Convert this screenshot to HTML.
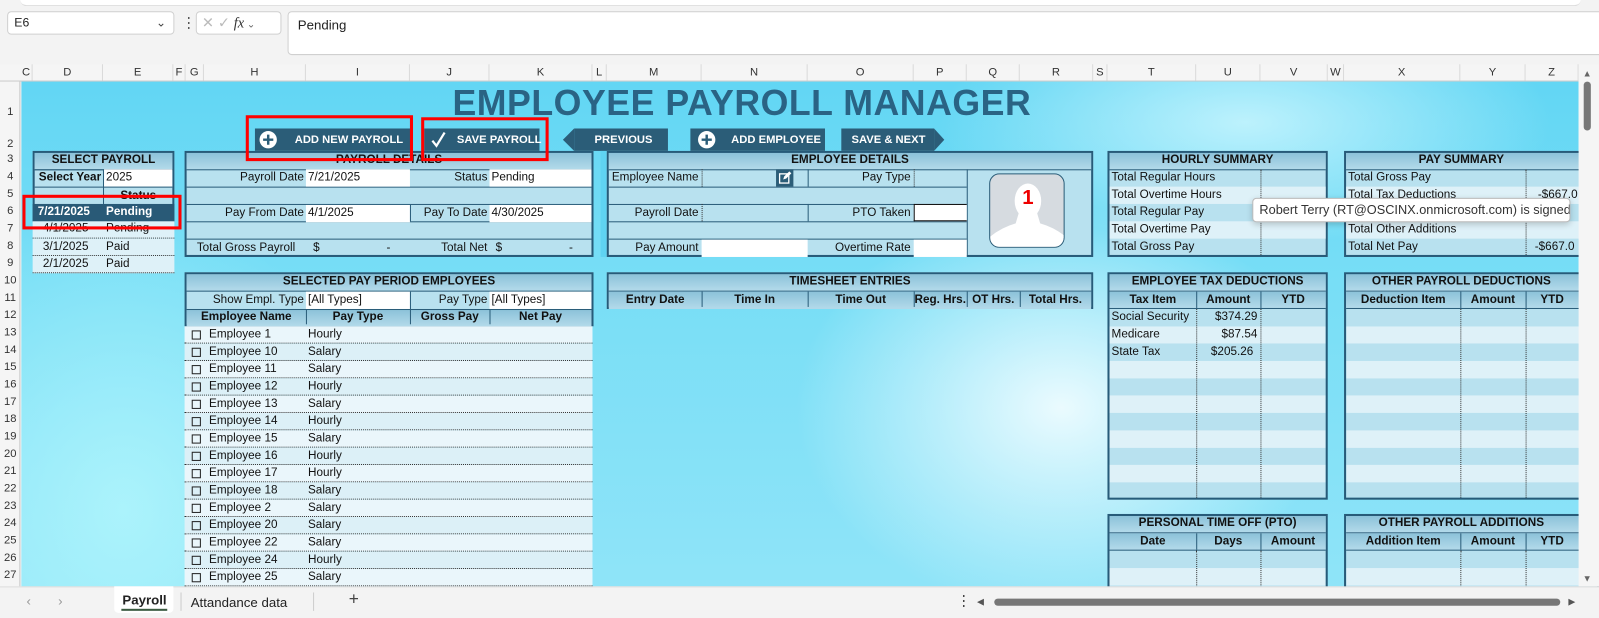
<!DOCTYPE html>
<html><head><meta charset="utf-8"><style>
*{box-sizing:border-box;margin:0;padding:0}
html,body{width:1599px;height:618px;overflow:hidden;background:#f3f3f3;font-family:"Liberation Sans",sans-serif}
#w{position:absolute;left:0;top:0;width:1568px;height:606px;transform:scale(1.01977);transform-origin:0 0;overflow:hidden;background:#f3f3f3}
.a{position:absolute}
.t{position:absolute;font-size:11.5px;line-height:17px;height:17px;color:#111;white-space:nowrap}
.b{font-weight:bold}
.r{text-align:right}
.c{text-align:center}
.hd{position:absolute;height:17px;background:linear-gradient(#8cc2d9,#b3daea);border-bottom:1px solid #2a5d7a}
.bx{position:absolute;border:2px solid #275b79}
.lt{position:absolute;height:17px;background:#def1f8}
.wh{position:absolute;height:17px;background:#fff}
.vd{position:absolute;width:0;border-left:1px dotted #333}
.vs{position:absolute;width:1px;background:#2a5d7a}
.hs{position:absolute;height:1px;background:#2a5d7a}
.ch{position:absolute;top:63px;font-size:11px;color:#333;text-align:center;height:16px;line-height:16px;border-right:1px solid #dadada}
.rh{position:absolute;left:0;width:20px;font-size:11px;color:#333;text-align:center;height:17px;line-height:17px}
.btn{position:absolute;top:126px;height:22px;background:#2b5d78;color:#fff;font-size:11px;font-weight:bold;line-height:22px;white-space:nowrap}
.btn span{white-space:nowrap}
.red{position:absolute;border:3px solid #f00}
.emp{position:absolute;left:181px;width:400px;height:17px;border-bottom:1px dotted #333;font-size:11.5px;line-height:17px;color:#111}
.emp span{position:absolute;white-space:nowrap}
.cb{position:absolute;left:7px;top:4px;width:9px;height:9px;border:1px solid #222}
</style></head><body><div id="w">

<div class="a" style="left:20px;top:0;width:1530px;height:6px;background:#fff;border-radius:0 0 6px 6px;border-bottom:1px solid #ddd"></div>
<div class="a" style="left:7px;top:11px;width:164px;height:23px;background:#fff;border:1px solid #d0d0d0;border-radius:4px;font-size:12px;line-height:21px;padding-left:6px;color:#222">E6<span style="position:absolute;right:7px;top:0;color:#444">&#8964;</span></div>
<div class="a" style="left:178px;top:13px;font-size:14px;color:#555;line-height:18px">&#8942;</div>
<div class="a" style="left:192px;top:11px;width:84px;height:23px;background:#fff;border:1px solid #d0d0d0;border-radius:4px;font-size:14px;line-height:21px;color:#bbb;padding-left:5px;white-space:nowrap">&#10005; &#10003; <i style="font-family:'Liberation Serif',serif;color:#333">fx</i><span style="font-size:10px;color:#666"> &#8964;</span></div>
<div class="a" style="left:282px;top:11px;width:1290px;height:43px;background:#fff;border:1px solid #d0d0d0;border-radius:4px;font-size:13px;padding:5px 0 0 9px;color:#222">Pending</div>

<div class="a" style="left:0;top:63px;width:1548px;height:17px;background:#f5f5f5;border-bottom:1px solid #c8c8c8"></div>
<div class="a" style="left:0;top:80px;width:20px;height:495px;background:#f5f5f5;border-right:1px solid #c8c8c8"></div>
<div class="ch" style="left:20px;width:12px">C</div>
<div class="ch" style="left:32px;width:69px">D</div>
<div class="ch" style="left:101px;width:69px">E</div>
<div class="ch" style="left:170px;width:12px">F</div>
<div class="ch" style="left:182px;width:18px">G</div>
<div class="ch" style="left:200px;width:100px">H</div>
<div class="ch" style="left:300px;width:102px">I</div>
<div class="ch" style="left:402px;width:78px">J</div>
<div class="ch" style="left:480px;width:101px">K</div>
<div class="ch" style="left:581px;width:14px">L</div>
<div class="ch" style="left:595px;width:93px">M</div>
<div class="ch" style="left:688px;width:104px">N</div>
<div class="ch" style="left:792px;width:104px">O</div>
<div class="ch" style="left:896px;width:52px">P</div>
<div class="ch" style="left:948px;width:52px">Q</div>
<div class="ch" style="left:1000px;width:72px">R</div>
<div class="ch" style="left:1072px;width:14px">S</div>
<div class="ch" style="left:1086px;width:87px">T</div>
<div class="ch" style="left:1173px;width:63px">U</div>
<div class="ch" style="left:1236px;width:66px">V</div>
<div class="ch" style="left:1302px;width:16px">W</div>
<div class="ch" style="left:1318px;width:114px">X</div>
<div class="ch" style="left:1432px;width:64px">Y</div>
<div class="ch" style="left:1496px;width:52px">Z</div>

<div class="rh" style="top:102px">1</div><div class="rh" style="top:133px">2</div>
<div class="rh" style="top:148px">3</div><div class="rh" style="top:165px">4</div><div class="rh" style="top:182px">5</div><div class="rh" style="top:199px">6</div><div class="rh" style="top:216px">7</div><div class="rh" style="top:233px">8</div><div class="rh" style="top:250px">9</div><div class="rh" style="top:267px">10</div><div class="rh" style="top:284px">11</div><div class="rh" style="top:301px">12</div><div class="rh" style="top:318px">13</div><div class="rh" style="top:335px">14</div><div class="rh" style="top:352px">15</div><div class="rh" style="top:369px">16</div><div class="rh" style="top:386px">17</div><div class="rh" style="top:403px">18</div><div class="rh" style="top:420px">19</div><div class="rh" style="top:437px">20</div><div class="rh" style="top:454px">21</div><div class="rh" style="top:471px">22</div><div class="rh" style="top:488px">23</div><div class="rh" style="top:505px">24</div><div class="rh" style="top:522px">25</div><div class="rh" style="top:539px">26</div><div class="rh" style="top:556px">27</div>

<div class="a" style="left:21px;top:80px;width:1527px;height:495px;background:
radial-gradient(ellipse 260px 200px at 1020px 320px,rgba(240,252,255,.95),rgba(240,252,255,0)),
radial-gradient(ellipse 300px 120px at 1200px 40px,rgba(210,248,255,.8),rgba(210,248,255,0)),
radial-gradient(ellipse 250px 300px at 100px 420px,rgba(175,245,252,.9),rgba(175,245,252,0)),
linear-gradient(180deg,#62d6f4 0%,#78def6 40%,#8fe4f8 100%)"></div>

<div class="a b" style="left:300px;top:81px;width:855px;text-align:center;font-size:35px;line-height:42px;color:#2a6384;letter-spacing:.5px">EMPLOYEE PAYROLL MANAGER</div>

<div class="btn" style="left:250px;width:154px"><svg class="a" style="left:4px;top:2px" width="18" height="18"><circle cx="9" cy="9" r="8.5" fill="#fff"/><path d="M9 4v10M4 9h10" stroke="#2b5d78" stroke-width="2.4"/></svg><span class="a" style="left:39px">ADD NEW PAYROLL</span></div>
<div class="btn" style="left:416px;width:113px"><svg class="a" style="left:6px;top:2px" width="16" height="18"><path d="M2 10l4 5L14 2" stroke="#fff" stroke-width="2.2" fill="none"/></svg><span class="a" style="left:32px">SAVE PAYROLL</span></div>
<div class="btn" style="left:563px;width:92px"><span class="a" style="left:20px">PREVIOUS</span></div>
<div class="a" style="left:552px;top:126px;width:0;height:0;border-top:11px solid transparent;border-bottom:11px solid transparent;border-right:11px solid #2b5d78"></div>
<div class="btn" style="left:677px;width:132px"><svg class="a" style="left:7px;top:2px" width="18" height="18"><circle cx="9" cy="9" r="8.5" fill="#fff"/><path d="M9 4v10M4 9h10" stroke="#2b5d78" stroke-width="2.4"/></svg><span class="a" style="left:40px">ADD EMPLOYEE</span></div>
<div class="btn" style="left:825px;width:91px"><span class="a" style="left:10px">SAVE &amp; NEXT</span></div>
<div class="a" style="left:916px;top:126px;width:0;height:0;border-top:11px solid transparent;border-bottom:11px solid transparent;border-left:10px solid #2b5d78"></div>
<div class="a" style="left:589px;top:148px;width:6px;height:104px;background:#5fd3f2"></div>

<!-- SELECT PAYROLL -->
<div class="bx" style="left:32px;top:148px;width:139px;height:70px;background:#b8e1ef"></div>
<div class="hd" style="left:34px;top:150px;width:135px"></div>
<div class="t b c" style="left:32px;top:149px;width:139px">SELECT PAYROLL</div>
<div class="hs" style="left:34px;top:166px;width:135px"></div>
<div class="t b" style="left:38px;top:166px">Select Year</div>
<div class="wh" style="left:102px;top:166px;width:67px"></div>
<div class="t" style="left:104px;top:166px">2025</div>
<div class="vs" style="left:101px;top:166px;height:34px"></div>
<div class="hs" style="left:34px;top:183px;width:135px"></div>
<div class="t b" style="left:118px;top:184px">Status</div>
<div class="a" style="left:32px;top:200px;width:139px;height:17px;background:#295a77"></div>
<div class="t b" style="left:37px;top:200px;color:#fff">7/21/2025</div>
<div class="t b" style="left:104px;top:200px;color:#fff">Pending</div>
<div class="lt" style="left:32px;top:217px;width:139px;border-bottom:1px dotted #333"></div>
<div class="lt" style="left:32px;top:234px;width:139px;border-bottom:1px dotted #333"></div>
<div class="lt" style="left:32px;top:251px;width:139px;border-bottom:1px dotted #333"></div>
<div class="t" style="left:42px;top:216px">4/1/2025</div><div class="t" style="left:104px;top:216px">Pending</div>
<div class="t" style="left:42px;top:234px">3/1/2025</div><div class="t" style="left:104px;top:234px">Paid</div>
<div class="t" style="left:42px;top:251px">2/1/2025</div><div class="t" style="left:104px;top:251px">Paid</div>

<!-- PAYROLL DETAILS -->
<div class="bx" style="left:181px;top:148px;width:401px;height:104px;background:#b8e1ef"></div>
<div class="hd" style="left:183px;top:150px;width:397px"></div>
<div class="t b c" style="left:181px;top:149px;width:401px">PAYROLL DETAILS</div>
<div class="hs" style="left:183px;top:183px;width:397px"></div>
<div class="hs" style="left:183px;top:200px;width:397px"></div>
<div class="hs" style="left:183px;top:217px;width:397px"></div>
<div class="hs" style="left:183px;top:234px;width:397px"></div>
<div class="wh" style="left:300px;top:166px;width:102px"></div>
<div class="wh" style="left:480px;top:166px;width:100px"></div>
<div class="wh" style="left:300px;top:201px;width:102px"></div>
<div class="wh" style="left:480px;top:201px;width:100px"></div>
<div class="vs" style="left:402px;top:201px;height:16px"></div>
<div class="t r" style="left:183px;top:166px;width:115px">Payroll Date</div><div class="t" style="left:302px;top:166px">7/21/2025</div>
<div class="t r" style="left:402px;top:166px;width:76px">Status</div><div class="t" style="left:482px;top:166px">Pending</div>
<div class="t r" style="left:183px;top:201px;width:115px">Pay From Date</div><div class="t" style="left:302px;top:201px">4/1/2025</div>
<div class="t r" style="left:402px;top:201px;width:76px">Pay To Date</div><div class="t" style="left:482px;top:201px">4/30/2025</div>
<div class="t" style="left:193px;top:235px">Total Gross Payroll</div><div class="t" style="left:307px;top:235px">$</div><div class="t" style="left:379px;top:235px">-</div>
<div class="t r" style="left:402px;top:235px;width:76px">Total Net</div><div class="t" style="left:486px;top:235px">$</div><div class="t" style="left:558px;top:235px">-</div>

<!-- EMPLOYEE DETAILS -->
<div class="bx" style="left:595px;top:148px;width:477px;height:104px;background:#b8e1ef"></div>
<div class="hd" style="left:597px;top:150px;width:473px"></div>
<div class="t b c" style="left:595px;top:149px;width:477px">EMPLOYEE DETAILS</div>
<div class="hs" style="left:597px;top:183px;width:351px"></div>
<div class="hs" style="left:597px;top:200px;width:351px"></div>
<div class="hs" style="left:597px;top:217px;width:351px"></div>
<div class="hs" style="left:597px;top:234px;width:351px"></div>
<div class="vs" style="left:948px;top:166px;height:84px"></div>
<div class="vs" style="left:792px;top:166px;height:17px"></div>
<div class="vs" style="left:792px;top:200px;height:17px"></div>
<div class="vd" style="left:688px;top:166px;height:17px"></div>
<div class="vd" style="left:896px;top:166px;height:17px"></div>
<div class="vd" style="left:688px;top:200px;height:17px"></div>
<div class="t" style="left:600px;top:166px">Employee Name</div>
<div class="a" style="left:761px;top:166px;width:17px;height:17px;background:#2b5d78"><svg width="17" height="17"><rect x="3.5" y="4.5" width="9" height="9" fill="none" stroke="#fff" stroke-width="1.3"/><path d="M7 10l1-3 5-5 2 2-5 5z" fill="#fff"/></svg></div>
<div class="t r" style="left:792px;top:166px;width:101px">Pay Type</div>
<div class="t r" style="left:597px;top:201px;width:88px">Payroll Date</div>
<div class="t r" style="left:792px;top:201px;width:101px">PTO Taken</div>
<div class="wh" style="left:896px;top:200px;width:52px;border:1px solid #111;border-right:none"></div>
<div class="wh" style="left:688px;top:235px;width:104px"></div>
<div class="wh" style="left:896px;top:235px;width:52px"></div>
<div class="t r" style="left:597px;top:235px;width:88px">Pay Amount</div>
<div class="t r" style="left:792px;top:235px;width:101px">Overtime Rate</div>
<div class="a" style="left:970px;top:170px;width:74px;height:73px;background:#d6dbe0;border:1.5px solid #2b5d78;border-radius:10px;overflow:hidden"><svg width="74" height="73"><ellipse cx="37" cy="26" rx="13" ry="17" fill="#fff"/><path d="M28 38q9 8 18 0l3 10q14 4 25 13v12H0V61q11-9 25-13z" fill="#fff"/><text x="37" y="29" text-anchor="middle" font-family="Liberation Sans" font-weight="bold" font-size="20" fill="#e00">1</text></svg></div>

<!-- HOURLY SUMMARY -->
<div class="bx" style="left:1086px;top:148px;width:216px;height:104px;background:#b8e1ef"></div>
<div class="hd" style="left:1088px;top:150px;width:212px"></div>
<div class="t b c" style="left:1086px;top:149px;width:216px">HOURLY SUMMARY</div>
<div class="lt" style="left:1088px;top:183px;width:212px"></div>
<div class="lt" style="left:1088px;top:217px;width:212px"></div>
<div class="vd" style="left:1236px;top:166px;height:84px"></div>
<div class="t" style="left:1090px;top:166px">Total Regular Hours</div>
<div class="t" style="left:1090px;top:183px">Total Overtime Hours</div>
<div class="t" style="left:1090px;top:200px">Total Regular Pay</div>
<div class="t" style="left:1090px;top:217px">Total Overtime Pay</div>
<div class="t" style="left:1090px;top:234px">Total Gross Pay</div>

<!-- PAY SUMMARY -->
<div class="bx" style="left:1318px;top:148px;width:250px;height:104px;background:#b8e1ef"></div>
<div class="hd" style="left:1320px;top:150px;width:248px"></div>
<div class="t b c" style="left:1318px;top:149px;width:230px">PAY SUMMARY</div>
<div class="lt" style="left:1320px;top:183px;width:248px"></div>
<div class="lt" style="left:1320px;top:217px;width:248px"></div>
<div class="vd" style="left:1496px;top:166px;height:84px"></div>
<div class="t" style="left:1322px;top:166px">Total Gross Pay</div>
<div class="t" style="left:1322px;top:183px">Total Tax Deductions</div><div class="t" style="left:1508px;top:183px">-$667.0</div>
<div class="t" style="left:1322px;top:217px">Total Other Additions</div>
<div class="t" style="left:1322px;top:234px">Total Net Pay</div><div class="t" style="left:1505px;top:234px">-$667.0</div>

<!-- SELECTED PAY PERIOD -->
<div class="bx" style="left:181px;top:267px;width:401px;height:53px;background:#b8e1ef"></div>
<div class="hd" style="left:183px;top:269px;width:397px"></div>
<div class="t b c" style="left:181px;top:268px;width:401px">SELECTED PAY PERIOD EMPLOYEES</div>
<div class="wh" style="left:300px;top:286px;width:102px"></div>
<div class="wh" style="left:480px;top:286px;width:100px"></div>
<div class="vs" style="left:402px;top:286px;height:17px"></div>
<div class="t r" style="left:183px;top:286px;width:115px">Show Empl. Type</div><div class="t" style="left:302px;top:286px">[All Types]</div>
<div class="t r" style="left:402px;top:286px;width:76px">Pay Type</div><div class="t" style="left:482px;top:286px">[All Types]</div>
<div class="hd" style="left:183px;top:303px;width:397px;border-top:1px solid #2a5d7a;border-bottom:none"></div>
<div class="vs" style="left:300px;top:303px;height:15px"></div>
<div class="vs" style="left:402px;top:303px;height:15px"></div>
<div class="vs" style="left:480px;top:303px;height:15px"></div>
<div class="t b c" style="left:183px;top:303px;width:117px">Employee Name</div>
<div class="t b c" style="left:300px;top:303px;width:102px">Pay Type</div>
<div class="t b c" style="left:402px;top:303px;width:78px">Gross Pay</div>
<div class="t b c" style="left:480px;top:303px;width:100px">Net Pay</div>

<div class="emp" style="top:320px;background:#eaf6fb"><i class="cb"></i><span style="left:24px">Employee 1</span><span style="left:121px">Hourly</span></div>
<div class="emp" style="top:337px;background:#dcf0f7"><i class="cb"></i><span style="left:24px">Employee 10</span><span style="left:121px">Salary</span></div>
<div class="emp" style="top:354px;background:#eaf6fb"><i class="cb"></i><span style="left:24px">Employee 11</span><span style="left:121px">Salary</span></div>
<div class="emp" style="top:371px;background:#dcf0f7"><i class="cb"></i><span style="left:24px">Employee 12</span><span style="left:121px">Hourly</span></div>
<div class="emp" style="top:388px;background:#eaf6fb"><i class="cb"></i><span style="left:24px">Employee 13</span><span style="left:121px">Salary</span></div>
<div class="emp" style="top:405px;background:#dcf0f7"><i class="cb"></i><span style="left:24px">Employee 14</span><span style="left:121px">Hourly</span></div>
<div class="emp" style="top:422px;background:#eaf6fb"><i class="cb"></i><span style="left:24px">Employee 15</span><span style="left:121px">Salary</span></div>
<div class="emp" style="top:439px;background:#dcf0f7"><i class="cb"></i><span style="left:24px">Employee 16</span><span style="left:121px">Hourly</span></div>
<div class="emp" style="top:456px;background:#eaf6fb"><i class="cb"></i><span style="left:24px">Employee 17</span><span style="left:121px">Hourly</span></div>
<div class="emp" style="top:473px;background:#dcf0f7"><i class="cb"></i><span style="left:24px">Employee 18</span><span style="left:121px">Salary</span></div>
<div class="emp" style="top:490px;background:#eaf6fb"><i class="cb"></i><span style="left:24px">Employee 2</span><span style="left:121px">Salary</span></div>
<div class="emp" style="top:507px;background:#dcf0f7"><i class="cb"></i><span style="left:24px">Employee 20</span><span style="left:121px">Salary</span></div>
<div class="emp" style="top:524px;background:#eaf6fb"><i class="cb"></i><span style="left:24px">Employee 22</span><span style="left:121px">Salary</span></div>
<div class="emp" style="top:541px;background:#dcf0f7"><i class="cb"></i><span style="left:24px">Employee 24</span><span style="left:121px">Hourly</span></div>
<div class="emp" style="top:558px;background:#eaf6fb"><i class="cb"></i><span style="left:24px">Employee 25</span><span style="left:121px">Salary</span></div>

<!-- TIMESHEET -->
<div class="bx" style="left:595px;top:267px;width:477px;height:36px;background:#b8e1ef"></div>
<div class="hd" style="left:597px;top:269px;width:473px"></div>
<div class="t b c" style="left:595px;top:268px;width:477px">TIMESHEET ENTRIES</div>
<div class="hd" style="left:597px;top:286px;width:473px;border-bottom:none"></div>
<div class="vs" style="left:688px;top:286px;height:15px"></div><div class="vs" style="left:792px;top:286px;height:15px"></div><div class="vs" style="left:896px;top:286px;height:15px"></div><div class="vs" style="left:948px;top:286px;height:15px"></div><div class="vs" style="left:1000px;top:286px;height:15px"></div>
<div class="t b c" style="left:597px;top:286px;width:91px">Entry Date</div>
<div class="t b c" style="left:688px;top:286px;width:104px">Time In</div>
<div class="t b c" style="left:792px;top:286px;width:104px">Time Out</div>
<div class="t b c" style="left:896px;top:286px;width:52px">Reg. Hrs.</div>
<div class="t b c" style="left:948px;top:286px;width:52px">OT Hrs.</div>
<div class="t b c" style="left:1000px;top:286px;width:70px">Total Hrs.</div>

<!-- TAX DEDUCTIONS -->
<div class="bx" style="left:1086px;top:267px;width:216px;height:223px;background:repeating-linear-gradient(#b8e1ef 0 17px,#def1f8 17px 34px) 0 34px"></div>
<div class="hd" style="left:1088px;top:269px;width:212px"></div>
<div class="t b c" style="left:1086px;top:268px;width:216px">EMPLOYEE TAX DEDUCTIONS</div>
<div class="hd" style="left:1088px;top:286px;width:212px"></div>
<div class="vs" style="left:1173px;top:286px;height:16px"></div><div class="vs" style="left:1236px;top:286px;height:16px"></div>
<div class="vd" style="left:1173px;top:303px;height:185px"></div><div class="vd" style="left:1236px;top:303px;height:185px"></div>
<div class="t b c" style="left:1088px;top:286px;width:85px">Tax Item</div>
<div class="t b c" style="left:1173px;top:286px;width:63px">Amount</div>
<div class="t b c" style="left:1236px;top:286px;width:64px">YTD</div>
<div class="t" style="left:1090px;top:303px">Social Security</div><div class="t r" style="left:1173px;top:303px;width:60px">$374.29</div>
<div class="t" style="left:1090px;top:320px">Medicare</div><div class="t r" style="left:1173px;top:320px;width:60px">$87.54</div>
<div class="t" style="left:1090px;top:337px">State Tax</div><div class="t r" style="left:1173px;top:337px;width:56px">$205.26</div>

<!-- OTHER PAYROLL DEDUCTIONS -->
<div class="bx" style="left:1318px;top:267px;width:250px;height:223px;background:repeating-linear-gradient(#b8e1ef 0 17px,#def1f8 17px 34px) 0 34px"></div>
<div class="hd" style="left:1320px;top:269px;width:248px"></div>
<div class="t b c" style="left:1318px;top:268px;width:230px">OTHER PAYROLL DEDUCTIONS</div>
<div class="hd" style="left:1320px;top:286px;width:248px"></div>
<div class="vs" style="left:1432px;top:286px;height:16px"></div><div class="vs" style="left:1496px;top:286px;height:16px"></div>
<div class="vd" style="left:1432px;top:303px;height:185px"></div><div class="vd" style="left:1496px;top:303px;height:185px"></div>
<div class="t b c" style="left:1320px;top:286px;width:112px">Deduction Item</div>
<div class="t b c" style="left:1432px;top:286px;width:64px">Amount</div>
<div class="t b c" style="left:1496px;top:286px;width:52px">YTD</div>

<!-- PTO -->
<div class="bx" style="left:1086px;top:504px;width:216px;height:80px;background:repeating-linear-gradient(#b8e1ef 0 17px,#def1f8 17px 34px) 0 34px"></div>
<div class="hd" style="left:1088px;top:506px;width:212px"></div>
<div class="t b c" style="left:1086px;top:505px;width:216px">PERSONAL TIME OFF (PTO)</div>
<div class="hd" style="left:1088px;top:523px;width:212px"></div>
<div class="vs" style="left:1173px;top:523px;height:16px"></div><div class="vs" style="left:1236px;top:523px;height:16px"></div>
<div class="vd" style="left:1173px;top:540px;height:40px"></div><div class="vd" style="left:1236px;top:540px;height:40px"></div>
<div class="t b c" style="left:1088px;top:523px;width:85px">Date</div>
<div class="t b c" style="left:1173px;top:523px;width:63px">Days</div>
<div class="t b c" style="left:1236px;top:523px;width:64px">Amount</div>

<!-- OTHER PAYROLL ADDITIONS -->
<div class="bx" style="left:1318px;top:504px;width:250px;height:80px;background:repeating-linear-gradient(#b8e1ef 0 17px,#def1f8 17px 34px) 0 34px"></div>
<div class="hd" style="left:1320px;top:506px;width:248px"></div>
<div class="t b c" style="left:1318px;top:505px;width:230px">OTHER PAYROLL ADDITIONS</div>
<div class="hd" style="left:1320px;top:523px;width:248px"></div>
<div class="vs" style="left:1432px;top:523px;height:16px"></div><div class="vs" style="left:1496px;top:523px;height:16px"></div>
<div class="vd" style="left:1432px;top:540px;height:40px"></div><div class="vd" style="left:1496px;top:540px;height:40px"></div>
<div class="t b c" style="left:1320px;top:523px;width:112px">Addition Item</div>
<div class="t b c" style="left:1432px;top:523px;width:64px">Amount</div>
<div class="t b c" style="left:1496px;top:523px;width:52px">YTD</div>

<div class="red" style="left:241px;top:113px;width:164px;height:45px"></div>
<div class="red" style="left:413px;top:115px;width:125px;height:43px"></div>
<div class="red" style="left:22px;top:191px;width:156px;height:34px"></div>

<div class="a" style="left:1228px;top:194px;width:312px;height:24px;background:#fff;border:1px solid #bbb;border-radius:4px;box-shadow:0 2px 6px rgba(0,0,0,.2);font-size:12.5px;line-height:22px;color:#333;padding-left:6px;white-space:nowrap;overflow:hidden">Robert Terry (RT@OSCINX.onmicrosoft.com) is signed in</div>

<div class="a" style="left:1548px;top:63px;width:20px;height:512px;background:#f5f5f5"></div>
<div class="a" style="left:1552px;top:67px;font-size:9px;color:#666">&#9650;</div>
<div class="a" style="left:1553px;top:80px;width:7px;height:48px;background:#777;border-radius:4px"></div>
<div class="a" style="left:1552px;top:562px;font-size:9px;color:#666">&#9660;</div>

<div class="a" style="left:0;top:575px;width:1568px;height:31px;background:#f3f3f3;border-top:1px solid #ddd"></div>
<div class="a" style="left:26px;top:582px;font-size:13px;color:#999">&#8249;</div>
<div class="a" style="left:57px;top:582px;font-size:13px;color:#999">&#8250;</div>
<div class="a" style="left:112px;top:575px;width:58px;height:26px;background:#fff;border-radius:0 0 4px 4px"></div>
<div class="a b" style="left:120px;top:581px;font-size:13px;color:#222">Payroll</div>
<div class="a" style="left:119px;top:597px;width:45px;height:2px;background:#3a5a40"></div>
<div class="a" style="left:177px;top:581px;width:1px;height:18px;background:#ccc"></div>
<div class="a" style="left:187px;top:583px;font-size:13px;color:#222;white-space:nowrap">Attandance data</div>
<div class="a" style="left:307px;top:581px;width:1px;height:18px;background:#ccc"></div>
<div class="a" style="left:342px;top:578px;font-size:17px;color:#444">+</div>
<div class="a" style="left:938px;top:581px;font-size:14px;color:#444">&#8942;</div>
<div class="a" style="left:958px;top:585px;font-size:9px;color:#555">&#9664;</div>
<div class="a" style="left:975px;top:587px;width:555px;height:7px;background:#777;border-radius:4px"></div>
<div class="a" style="left:1538px;top:585px;font-size:9px;color:#555">&#9654;</div>

</div></body></html>
